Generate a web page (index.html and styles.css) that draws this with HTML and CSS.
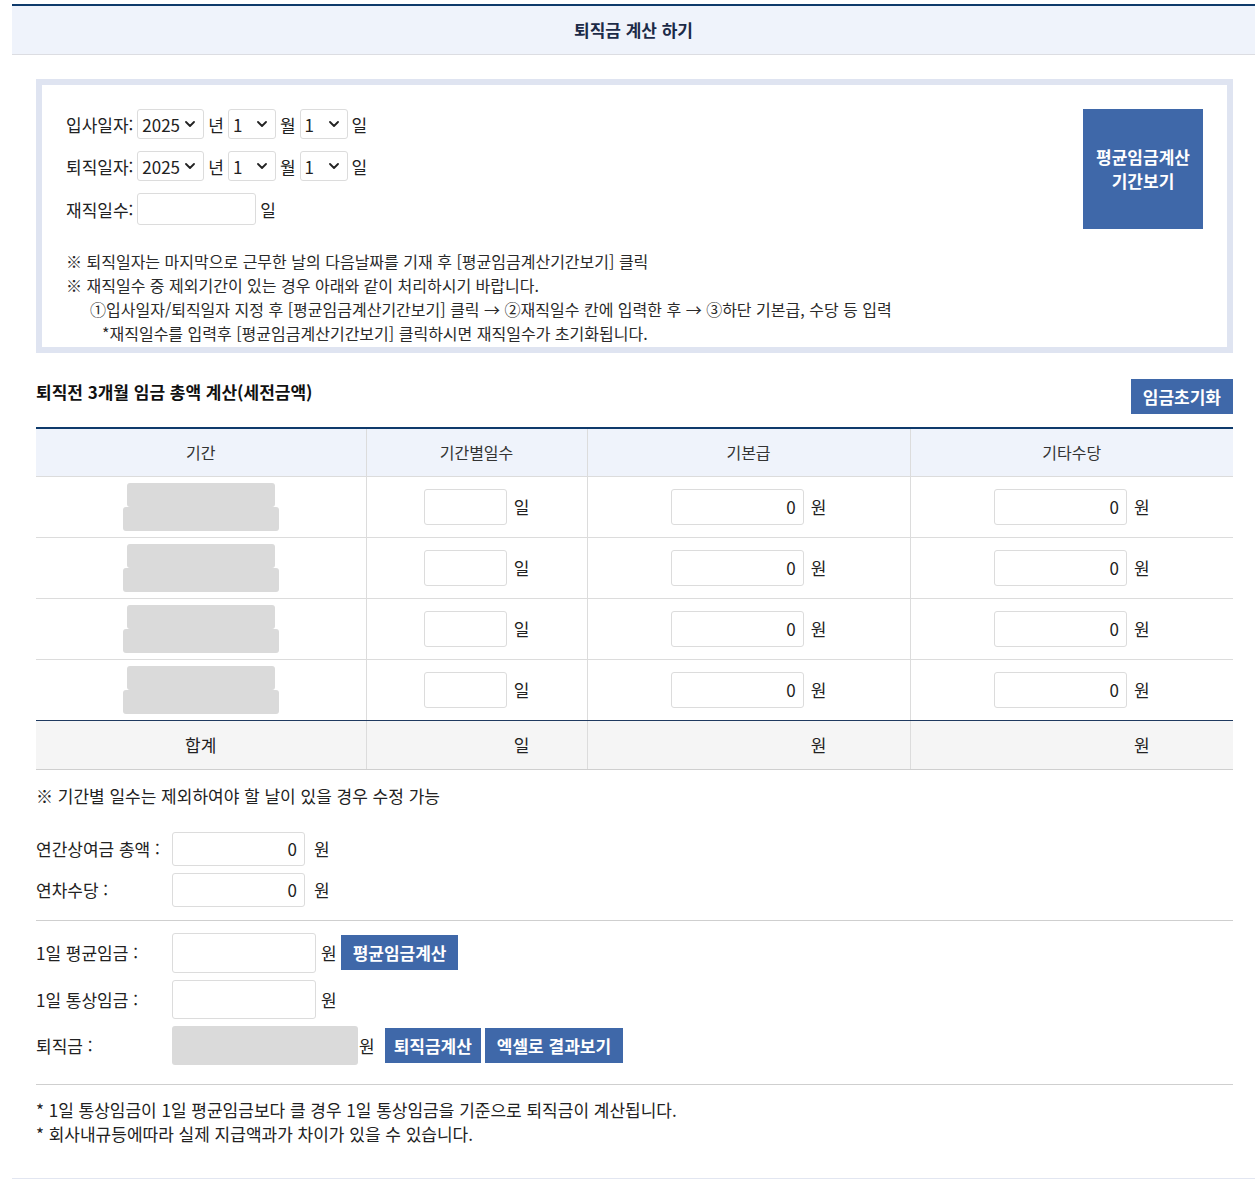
FILE: index.html
```html
<!DOCTYPE html>
<html lang="ko">
<head>
<meta charset="utf-8">
<title>퇴직금 계산 하기</title>
<link rel="stylesheet" href="styles.css">
</head>
<body>
<div class="wrap">
  <h1 class="page-title">퇴직금 계산 하기</h1>
  <div class="content">
    <section class="period-box">
      <div class="period-top">
        <div class="period-form">
          <div class="frow">
            <span class="flabel">입사일자:</span>
            <span class="selbox sel-year"><select class="sel"><option>2025</option></select><svg class="chev" viewBox="0 0 10 6" width="10" height="6"><path d="M1 1 L5 5 L9 1" fill="none" stroke="#222" stroke-width="1.8" stroke-linecap="round" stroke-linejoin="round"/></svg></span>
            <span>년</span>
            <span class="selbox sel-md"><select class="sel"><option>1</option></select><svg class="chev" viewBox="0 0 10 6" width="10" height="6"><path d="M1 1 L5 5 L9 1" fill="none" stroke="#222" stroke-width="1.8" stroke-linecap="round" stroke-linejoin="round"/></svg></span>
            <span>월</span>
            <span class="selbox sel-md"><select class="sel"><option>1</option></select><svg class="chev" viewBox="0 0 10 6" width="10" height="6"><path d="M1 1 L5 5 L9 1" fill="none" stroke="#222" stroke-width="1.8" stroke-linecap="round" stroke-linejoin="round"/></svg></span>
            <span>일</span>
          </div>
          <div class="frow">
            <span class="flabel">퇴직일자:</span>
            <span class="selbox sel-year"><select class="sel"><option>2025</option></select><svg class="chev" viewBox="0 0 10 6" width="10" height="6"><path d="M1 1 L5 5 L9 1" fill="none" stroke="#222" stroke-width="1.8" stroke-linecap="round" stroke-linejoin="round"/></svg></span>
            <span>년</span>
            <span class="selbox sel-md"><select class="sel"><option>1</option></select><svg class="chev" viewBox="0 0 10 6" width="10" height="6"><path d="M1 1 L5 5 L9 1" fill="none" stroke="#222" stroke-width="1.8" stroke-linecap="round" stroke-linejoin="round"/></svg></span>
            <span>월</span>
            <span class="selbox sel-md"><select class="sel"><option>1</option></select><svg class="chev" viewBox="0 0 10 6" width="10" height="6"><path d="M1 1 L5 5 L9 1" fill="none" stroke="#222" stroke-width="1.8" stroke-linecap="round" stroke-linejoin="round"/></svg></span>
            <span>일</span>
          </div>
          <div class="frow frow-last">
            <span class="flabel">재직일수:</span>
            <input class="txt txt-work" type="text">
            <span>일</span>
          </div>
        </div>
        <button class="btn btn-big" type="button">평균임금계산<br>기간보기</button>
      </div>
      <div class="box-notes">
        <p>※ 퇴직일자는 마지막으로 근무한 날의 다음날짜를 기재 후 [평균임금계산기간보기] 클릭</p>
        <p>※ 재직일수 중 제외기간이 있는 경우 아래와 같이 처리하시기 바랍니다.</p>
        <p class="ind1">①입사일자/퇴직일자 지정 후 [평균임금계산기간보기] 클릭 → ②재직일수 칸에 입력한 후 → ③하단 기본급, 수당 등 입력</p>
        <p class="ind2">*재직일수를 입력후 [평균임금계산기간보기] 클릭하시면 재직일수가 초기화됩니다.</p>
      </div>
    </section>

    <div class="sec-head">
      <h2 class="sec-title">퇴직전 3개월 임금 총액 계산(세전금액)</h2>
      <button class="btn btn-reset" type="button">임금초기화</button>
    </div>

    <table class="wage">
      <colgroup>
        <col class="c1"><col class="c2"><col class="c3"><col class="c4">
      </colgroup>
      <thead>
        <tr><th>기간</th><th>기간별일수</th><th>기본급</th><th>기타수당</th></tr>
      </thead>
      <tbody>
        <tr>
          <td><span class="per per-a"></span><span class="per per-b"></span></td>
          <td><div class="cell"><input class="txt num num-day" type="text"><span>일</span></div></td>
          <td><div class="cell"><input class="txt num num-won" type="text" value="0"><span>원</span></div></td>
          <td><div class="cell"><input class="txt num num-won" type="text" value="0"><span>원</span></div></td>
        </tr>
        <tr>
          <td><span class="per per-a"></span><span class="per per-b"></span></td>
          <td><div class="cell"><input class="txt num num-day" type="text"><span>일</span></div></td>
          <td><div class="cell"><input class="txt num num-won" type="text" value="0"><span>원</span></div></td>
          <td><div class="cell"><input class="txt num num-won" type="text" value="0"><span>원</span></div></td>
        </tr>
        <tr>
          <td><span class="per per-a"></span><span class="per per-b"></span></td>
          <td><div class="cell"><input class="txt num num-day" type="text"><span>일</span></div></td>
          <td><div class="cell"><input class="txt num num-won" type="text" value="0"><span>원</span></div></td>
          <td><div class="cell"><input class="txt num num-won" type="text" value="0"><span>원</span></div></td>
        </tr>
        <tr>
          <td><span class="per per-a"></span><span class="per per-b"></span></td>
          <td><div class="cell"><input class="txt num num-day" type="text"><span>일</span></div></td>
          <td><div class="cell"><input class="txt num num-won" type="text" value="0"><span>원</span></div></td>
          <td><div class="cell"><input class="txt num num-won" type="text" value="0"><span>원</span></div></td>
        </tr>
      </tbody>
      <tfoot>
        <tr>
          <td>합계</td>
          <td><div class="cell"><span class="sp sp-day"></span><span>일</span></div></td>
          <td><div class="cell"><span class="sp sp-won"></span><span>원</span></div></td>
          <td><div class="cell"><span class="sp sp-won"></span><span>원</span></div></td>
        </tr>
      </tfoot>
    </table>

    <p class="tbl-note">※ 기간별 일수는 제외하여야 할 날이 있을 경우 수정 가능</p>

    <div class="frm frm-bonus">
      <div class="frm-row">
        <span class="frm-label">연간상여금 총액 :</span>
        <input class="txt num num-bonus" type="text" value="0">
        <span class="unit">원</span>
      </div>
      <div class="frm-row">
        <span class="frm-label">연차수당 :</span>
        <input class="txt num num-bonus" type="text" value="0">
        <span class="unit">원</span>
      </div>
    </div>

    <div class="frm frm-result">
      <div class="frm-row">
        <span class="frm-label">1일 평균임금 :</span>
        <input class="txt num num-res" type="text">
        <span class="unit unit-s">원</span>
        <button class="btn btn-sm" type="button">평균임금계산</button>
      </div>
      <div class="frm-row">
        <span class="frm-label">1일 통상임금 :</span>
        <input class="txt num num-res num-res2" type="text">
        <span class="unit unit-s">원</span>
      </div>
      <div class="frm-row">
        <span class="frm-label">퇴직금 :</span>
        <span class="res-box"></span>
        <span class="unit unit-t">원</span>
        <button class="btn btn-sm btn-calc" type="button">퇴직금계산</button>
        <button class="btn btn-sm" type="button">엑셀로 결과보기</button>
      </div>
    </div>

    <div class="foot-notes">
      <p>* 1일 통상임금이 1일 평균임금보다 클 경우 1일 통상임금을 기준으로 퇴직금이 계산됩니다.</p>
      <p>* 회사내규등에따라 실제 지급액과가 차이가 있을 수 있습니다.</p>
    </div>
  </div>
</div>
</body>
</html>
```

FILE: styles.css
```css
* { box-sizing: border-box; }

body {
  margin: 0;
  font-family: "Noto Sans CJK KR", "Noto Sans", sans-serif;
  font-size: 17px;
  color: #222;
  background: #fff;
}

p { margin: 0; }

.wrap {
  margin: 4px 0 0 12px;
  border-top: 2px solid #0e3a6b;
  border-bottom: 1px solid #e2e6f1;
}

.page-title {
  margin: 0;
  height: 49px;
  background: #eff3fb;
  border-bottom: 1px solid #dcdde2;
  font-size: 17px;
  font-weight: 700;
  line-height: 48px;
  text-align: center;
  color: #1c2b48;
}

.content {
  padding: 24px 22px 32px 24px;
}

/* ---- period box ---- */
.period-box {
  border: 6px solid #dfe4f1;
  padding: 24px 24px 2px 24px;
}

.period-top {
  display: flex;
  justify-content: space-between;
  align-items: flex-start;
}

.frow {
  display: flex;
  align-items: center;
  gap: 4px;
  height: 30px;
  margin-bottom: 12px;
  font-size: 17px;
}

.frow-last {
  height: 32px;
  margin-bottom: 0;
}

.selbox {
  display: inline-flex;
  align-items: center;
  height: 30px;
  border: 1px solid #dcdcdc;
  border-radius: 3px;
  background: #fff;
}

.sel {
  flex: 1;
  min-width: 0;
  height: 28px;
  border: 0;
  outline: 0;
  background: transparent;
  -webkit-appearance: none;
  appearance: none;
  font-family: "Noto Sans CJK KR", "Noto Sans", sans-serif;
  font-size: 17px;
  color: #222;
  padding: 0 0 0 4px;
}

.chev {
  flex: none;
  margin: 0 8px 0 2px;
}

.sel-year { width: 67px; }
.sel-md { width: 48px; }

.txt {
  border: 1px solid #dcdcdc;
  border-radius: 3px;
  background: #fff;
  font-family: "Noto Sans CJK KR", "Noto Sans", sans-serif;
  color: #222;
}

.txt-work {
  width: 119px;
  height: 32px;
}

.btn {
  border: 0;
  border-radius: 0;
  background: #3f68a9;
  color: #fff;
  font-family: "Noto Sans CJK KR", "Noto Sans", sans-serif;
  font-weight: 700;
  cursor: pointer;
}

.btn-big {
  width: 120px;
  height: 120px;
  font-size: 17px;
  line-height: 24px;
  padding: 0;
}

.box-notes {
  margin-top: 20px;
  font-size: 16px;
  line-height: 24px;
  color: #2a2a2a;
}

.ind1 { padding-left: 24px; }
.ind2 { padding-left: 36px; }

/* ---- section ---- */
.sec-head {
  margin-top: 26px;
  display: flex;
  justify-content: space-between;
  align-items: flex-start;
  height: 35px;
}

.sec-title {
  margin: 0;
  font-size: 17px;
  line-height: 25px;
  font-weight: 700;
  color: #111;
}

.btn-reset {
  height: 35px;
  padding: 0 12px;
  font-size: 17px;
}

/* ---- table ---- */
.wage {
  width: 100%;
  margin-top: 13px;
  border-collapse: collapse;
  table-layout: fixed;
  border-top: 2px solid #0e3a6b;
}

.c1 { width: 330px; }
.c2 { width: 221px; }
.c3 { width: 323px; }
.c4 { width: 323px; }

.wage th {
  height: 48px;
  padding: 0;
  background: #eff3fb;
  font-weight: 400;
  font-size: 16px;
  color: #333;
  border-bottom: 1px solid #dcdcdc;
}

.wage td {
  height: 61px;
  padding: 0;
  text-align: center;
  vertical-align: middle;
  border-bottom: 1px solid #dcdcdc;
  font-size: 17px;
}

.wage th + th,
.wage td + td {
  border-left: 1px solid #dcdcdc;
}

.wage tbody tr:last-child td {
  border-bottom: 1px solid #1f3a60;
}

.wage tfoot td {
  height: 49px;
  background: #f5f5f5;
  border-bottom: 1px solid #cfcfcf;
}

.per {
  display: block;
  margin: 0 auto;
  background: #dadada;
  border-radius: 3px;
}

.per-a { width: 148px; height: 24px; }
.per-b { width: 156px; height: 24px; }

.cell {
  display: flex;
  justify-content: center;
  align-items: center;
  gap: 7px;
}

.num {
  height: 36px;
  font-size: 17px;
  text-align: right;
  padding: 0 7px 0 4px;
}

.num-day { width: 83px; }
.num-won { width: 133px; }

.sp { display: block; height: 1px; }
.sp-day { width: 83px; }
.sp-won { width: 133px; }

.tbl-note {
  margin-top: 14px;
  font-size: 17px;
  line-height: 24px;
}

/* ---- bottom forms ---- */
.frm-bonus {
  margin-top: 24px;
  padding-bottom: 13px;
  border-bottom: 1px solid #cfcfcf;
  display: flex;
  flex-direction: column;
  gap: 7px;
}

.frm-row {
  display: flex;
  align-items: center;
  font-size: 17px;
}

.frm-label {
  width: 136px;
  flex: none;
}

.num-bonus {
  width: 133px;
  height: 34px;
}

.unit { margin-left: 9px; }

.frm-result {
  margin-top: 12px;
  padding-bottom: 19px;
  border-bottom: 1px solid #cfcfcf;
  display: flex;
  flex-direction: column;
  gap: 7px;
}

.num-res {
  width: 144px;
  height: 40px;
}

.num-res2 { height: 39px; }

.unit-s { margin-left: 5px; margin-right: 4px; }
.unit-t { margin-left: 1px; margin-right: 10px; }

.res-box {
  display: block;
  width: 186px;
  height: 39px;
  background: #dadada;
  border-radius: 3px;
}

.btn-sm {
  height: 35px;
  padding: 0 12px;
  font-size: 17px;
}

.btn-calc { padding: 0 9px; }

.btn-sm + .btn-sm { margin-left: 4px; }

.foot-notes {
  margin-top: 13px;
  font-size: 17px;
  line-height: 24px;
}
```
